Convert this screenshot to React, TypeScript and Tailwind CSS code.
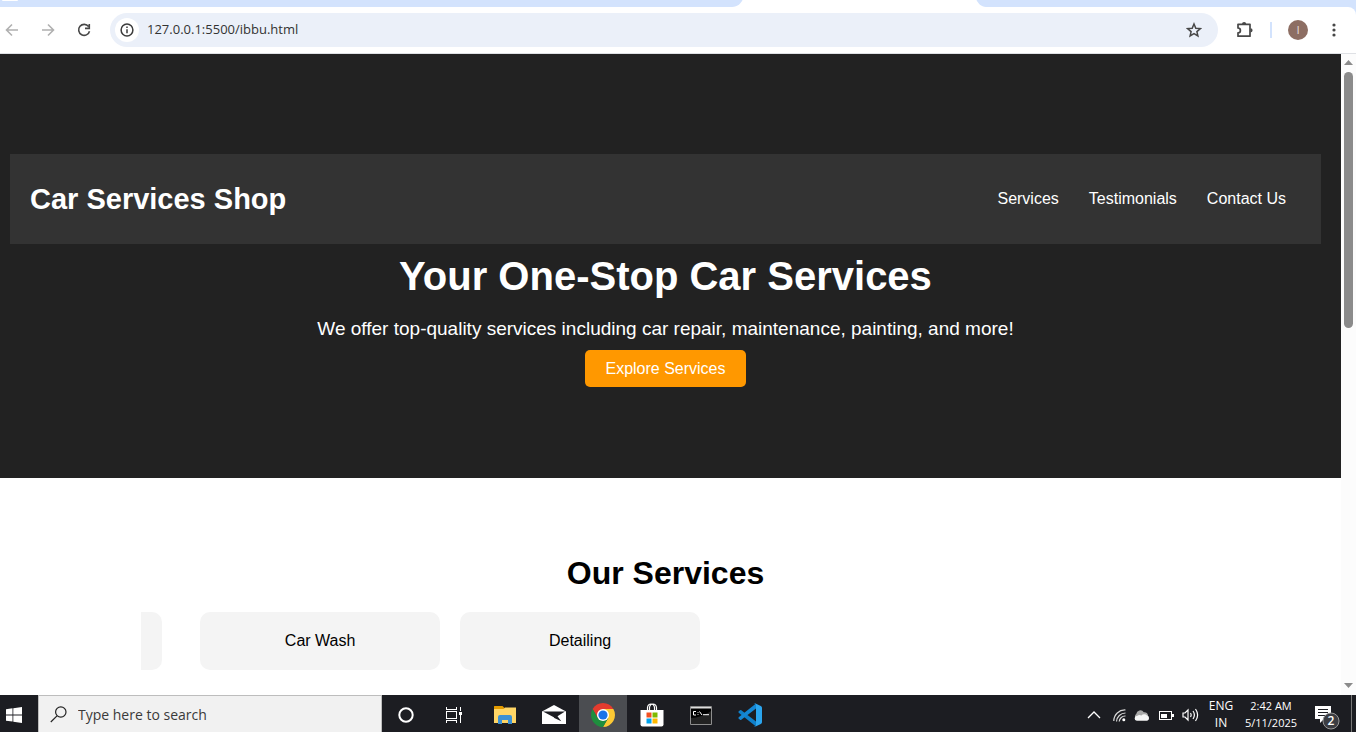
import type { ReactNode } from "react";

const navLinks = ["Services", "Testimonials", "Contact Us"];
const services = ["Car Wash", "Detailing"];

function TabStrip() {
  return (
    <div className="flex h-[7px] shrink-0 bg-[#d3e3fd]">
      <div className="flex w-[732px] items-start pl-[2px]">
        <span className="h-px w-4 rounded-b bg-white" />
      </div>
      <svg width="254" height="7" viewBox="0 0 254 7" aria-hidden="true">
        <path d="M0 7C6 7 9 3 10.500 0H244.500C246 3 249 7 254 7Z" fill="#fff" />
      </svg>
    </div>
  );
}

function Toolbar() {
  return (
    <div className="shrink-0 bg-[#d3e3fd]">
      <header className="flex h-[47px] items-center rounded-tr-lg border-b border-[#dfe1e5] bg-white pr-[13px] text-[#474747]">
        <button aria-label="Back" className="ml-1 text-[#b0b0b0]">
          <svg width="16" height="16" viewBox="0 0 16 16" fill="none" stroke="currentColor" strokeWidth="1.6">
            <path d="M14 8H3M8 2.500 2.500 8 8 13.500" />
          </svg>
        </button>
        <button aria-label="Forward" className="ml-5 text-[#b0b0b0]">
          <svg width="16" height="16" viewBox="0 0 16 16" fill="none" stroke="currentColor" strokeWidth="1.6">
            <path d="M2 8h11M8 2.500 13.500 8 8 13.500" />
          </svg>
        </button>
        <button aria-label="Reload" className="ml-5">
          <svg width="16" height="16" viewBox="0 0 16 16" fill="none" stroke="#474747" strokeWidth="1.600">
            <path d="M12.600 4.600A5.500 5.500 0 1 0 13.500 9.200M13.300 2v4.400H9" />
          </svg>
        </button>
        <div className="ml-[18px] flex h-[34px] flex-1 items-center rounded-full bg-[#ebf0f9] pr-4 pl-[5px]">
          <button aria-label="Site information" className="grid size-6 place-items-center rounded-full bg-white">
            <svg width="14" height="14" viewBox="0 0 14 14" fill="none" stroke="#3c3c3c" strokeWidth="1.500">
              <circle cx="7" cy="7" r="5.900" />
              <path d="M7 6.200v4M7 3.600v1.500" />
            </svg>
          </button>
          <input
            aria-label="Address"
            defaultValue="127.0.0.1:5500/ibbu.html"
            className="ml-2 min-w-0 flex-1 bg-transparent font-['Open_Sans',sans-serif] text-[13px] text-[#333333] outline-none"
          />
          <button aria-label="Bookmark this tab">
            <svg width="16" height="16" viewBox="0 0 16 16" fill="none" stroke="#474747" strokeWidth="1.500">
              <path d="M8 2l1.800 4.200 4.600.4-3.500 3 1 4.400L8 11.700 4.100 14l1-4.400-3.500-3 4.600-.4Z" />
            </svg>
          </button>
        </div>
        <button aria-label="Extensions" className="ml-[18px]">
          <svg width="18" height="18" viewBox="0 0 18 18">
            <path
              d="M2 3.300h12v11.900H2v-3.400a2.400 2.400 0 0 0 0-4.800Z"
              fill="none"
              stroke="#474747"
              strokeWidth="1.700"
              strokeLinejoin="round"
            />
            <path d="M6 3a2.100 2.100 0 0 1 4.200 0ZM14.500 7.200a2.100 2.100 0 0 1 0 4.200Z" fill="#474747" />
          </svg>
        </button>
        <span className="ml-4 h-4 w-0.5 bg-[#d3e3fd]" />
        <button
          aria-label="Profile"
          className="ml-4 grid size-5 place-items-center rounded-full bg-[#8d6e63] font-['Roboto',sans-serif] text-[10px] text-[#e5dcd8]"
        >
          I
        </button>
        <button aria-label="Menu" className="ml-[17px]">
          <svg width="18" height="18" viewBox="0 0 18 18" fill="#474747">
            <circle cx="9" cy="4" r="1.600" />
            <circle cx="9" cy="9" r="1.600" />
            <circle cx="9" cy="14" r="1.600" />
          </svg>
        </button>
      </header>
    </div>
  );
}

function Scrollbar() {
  return (
    <div className="flex w-[15px] shrink-0 flex-col items-center bg-[#fcfcfc] pt-[5px] pb-[6px]" aria-hidden="true">
      <svg width="9" height="7" viewBox="0 0 9 7" fill="#8b8b8b">
        <path d="M0 6 4.500 1 9 6Z" />
      </svg>
      <div className="flex flex-1 flex-col pt-[6px]">
        <span className="h-[42%] w-[9px] rounded-full bg-[#8b8b8b]" />
      </div>
      <svg width="9" height="7" viewBox="0 0 9 7" fill="#8b8b8b">
        <path d="M0 1 4.500 6 9 1Z" />
      </svg>
    </div>
  );
}

function Site() {
  return (
    <main className="min-w-0 flex-1 overflow-hidden bg-white font-['Liberation_Sans',sans-serif] text-base leading-[18px] text-black">
      <section className="bg-[#222222] pt-[100px] pr-5 pb-[91px] pl-[10px] text-center text-white">
        <nav className="flex h-[90px] items-center justify-between bg-[#333333] px-5 text-left">
          <h2 className="text-[29px] leading-8 font-bold">Car Services Shop</h2>
          <ul className="flex gap-[30px] pr-[15px]">
            {navLinks.map((label) => (
              <li key={label}>
                <a href="#services">{label}</a>
              </li>
            ))}
          </ul>
        </nav>
        <h1 className="mt-[9px] text-[40px] leading-[46px] font-bold">Your One-Stop Car Services</h1>
        <p className="mt-[19px] text-[19px] leading-[22px]">
          We offer top-quality services including car repair, maintenance, painting, and more!
        </p>
        <button className="mt-[10px] block h-[37px] justify-self-center rounded-[5px] bg-[#ff9800] px-5">
          Explore Services
        </button>
      </section>
      <section id="services" className="pt-[77px] pr-5 pl-[10px]">
        <h2 className="text-center text-[32px] leading-[37px] font-bold">Our Services</h2>
        <div className="mx-auto mt-5 flex w-4/5 overflow-hidden">
          <div className="h-[58px] w-[21px] shrink-0 rounded-r-[10px] bg-[#f4f4f4]" />
          <ul className="ml-[38px] flex gap-5">
            {services.map((name) => (
              <li key={name} className="w-60 rounded-[10px] bg-[#f4f4f4] p-5 text-center">
                {name}
              </li>
            ))}
          </ul>
        </div>
      </section>
    </main>
  );
}

function AppButton({ label, active, children }: { label: string; active?: boolean; children: ReactNode }) {
  return (
    <button
      aria-label={label}
      className={active ? "grid w-12 place-items-center bg-[#4b4d51] pt-[3px]" : "grid w-12 place-items-center pt-[3px]"}
    >
      {children}
    </button>
  );
}

function PinnedApps() {
  return (
    <div className="flex">
      <AppButton label="Cortana">
        <svg width="18" height="18" viewBox="0 0 18 18" fill="none" stroke="#fff" strokeWidth="2">
          <circle cx="9" cy="9" r="6.700" />
        </svg>
      </AppButton>
      <AppButton label="Task view">
        <svg width="18" height="16" viewBox="0 0 18 16" fill="none" stroke="#fff" shapeRendering="crispEdges">
          <path d="M1.500 4.500h10v7h-10ZM1.500 0v2.500h10V0M1.500 16v-2.500h10V16M15.500 0v4M15.500 8v8" />
          <path d="M14 5h3v3h-3Z" fill="#fff" stroke="none" />
        </svg>
      </AppButton>
      <div className="ml-[3px] flex gap-px">
        <AppButton label="File Explorer">
          <svg width="22" height="20" viewBox="0 0 22 20">
            <path d="M0 1.500A.5.500 0 0 1 .5 1H8.500l2 2v3H0Z" fill="#e39b00" />
            <path d="M0 4h9.500l1.500-1.500h11V18H0Z" fill="#ffd666" />
            <path d="M4 19v-7q0-2 2-2h10q2 0 2 2v7h-4v-4H8v4Z" fill="#3c91d4" />
          </svg>
        </AppButton>
        <AppButton label="Mail">
          <svg width="24" height="20" viewBox="0 0 24 20">
            <path d="M0 6.500 12 0l12 6.500V19H0Z" fill="#fff" />
            <path d="M1 6.500h22l-7.500 4.700 3.800 5-7-3.200-.5-.7Z" fill="#1c1d22" />
          </svg>
        </AppButton>
        <AppButton label="Google Chrome" active>
          <svg width="24" height="24" viewBox="0 0 24 24">
            <path d="M12 12 1.610 6A12 12 0 0 1 22.390 6Z" fill="#e33b2e" />
            <path d="M12 6H22.390A12 12 0 0 1 12 24L17.200 15Z" fill="#fcc934" />
            <path d="M1.610 6 6.800 15 12 12V6Z" fill="#e33b2e" />
            <path d="M1.610 6 6.800 15 12 18l5.200-3L12 24A12 12 0 0 1 1.610 6Z" fill="#1e8e3e" />
            <circle cx="12" cy="12" r="6" fill="#fff" />
            <circle cx="12" cy="12" r="4.600" fill="#1a73e8" />
          </svg>
        </AppButton>
        <AppButton label="Microsoft Store">
          <svg width="24" height="24" viewBox="0 0 24 24">
            <path
              d="M7.500 7V4.500Q8 1 11 1t3.500 3.500V7M9.500 7V4.500Q10 1 13 1t3.500 3.500V7"
              fill="none"
              stroke="#fff"
              strokeWidth="1.200"
            />
            <path d="M.5 7h23v14.500q0 2-2 2h-19q-2 0-2-2Z" fill="#fff" />
            <path d="M6.500 9.500h5v5h-5Z" fill="#f25022" />
            <path d="M12.500 9.500h5v5h-5Z" fill="#7fba00" />
            <path d="M6.500 15.500h5v5h-5Z" fill="#00a4ef" />
            <path d="M12.500 15.500h5v5h-5Z" fill="#ffb900" />
          </svg>
        </AppButton>
        <AppButton label="Command Prompt">
          <svg width="22" height="19" viewBox="0 0 22 19">
            <path d="M.5.500h21v18H.5Z" fill="#000" stroke="#8e8e8e" />
            <path d="M1 1h20v1.500H1Z" fill="#ddd" />
            <path d="M1 12C8 12 15 9 21 5v13H1Z" fill="#222" />
            <path d="M6 5.500H3.500v3.500H6M8 6v.8M8 8.200V9M9.500 5.500 12 9M13 8.700h6" fill="none" stroke="#fff" />
          </svg>
        </AppButton>
        <AppButton label="Visual Studio Code">
          <svg width="24" height="24" viewBox="0 0 24 24">
            <path d="M.5 8.500 2 7.200q.6-.5 1.300 0L18 18.500v5L1 10Q0 9.200.5 8.500Z" fill="#0f7fc9" />
            <path d="M.5 15.500 2 16.800q.6.500 1.300 0L18 5.500v-5L1 14q-1 .8-.5 1.500Z" fill="#1487d4" />
            <path
              d="M17 .3 22.800 3q1.200.6 1.200 1.800v14.400q0 1.200-1.200 1.800L17 23.700q-.7.300-1.400-.3 2.400.8 2.400-1.500V2.100Q18-.2 15.600.6q.7-.6 1.400-.3Z"
              fill="#2ba5ee"
            />
          </svg>
        </AppButton>
      </div>
    </div>
  );
}

function Tray() {
  return (
    <div className="ml-auto flex text-white">
      <div className="flex items-center gap-2 pt-[3px]">
        <button aria-label="Show hidden icons">
          <svg width="14" height="10" viewBox="0 0 14 10" fill="none" stroke="#fff" strokeWidth="1.300">
            <path d="M1 8l6-6 6 6" />
          </svg>
        </button>
        <button aria-label="Network" className="ml-1">
          <svg width="13" height="13" viewBox="0 0 13 13" fill="none" stroke="#d8d8d8" strokeWidth="1.200">
            <path d="M.8 12A11 11 0 0 1 12.500 1M3.500 12.500A9 9 0 0 1 12.500 4M6.200 12.500A6 6 0 0 1 12.500 7" />
            <circle cx="10.800" cy="10.800" r="1.500" fill="#fff" stroke="none" />
          </svg>
        </button>
        <button aria-label="OneDrive">
          <svg width="16" height="11" viewBox="0 0 16 11">
            <path d="M2 8.500A2.800 2.800 0 0 1 2.200 4 4.200 4.200 0 0 1 9.800 2.200 3.600 3.600 0 0 1 14 6Z" fill="#a8a8a8" />
            <path
              d="M2.800 10.700a2.300 2.300 0 0 1 .3-4.600 3.500 3.500 0 0 1 4.300-.6 3.600 3.600 0 0 1 5.600 0 2.700 2.700 0 0 1 .2 5.200Z"
              fill="#f5f5f5"
            />
          </svg>
        </button>
        <button aria-label="Battery">
          <svg width="16" height="11" viewBox="0 0 16 11" shapeRendering="crispEdges">
            <path d="M1 1.500h12.500v8H1Z" fill="none" stroke="#fff" />
            <path d="M3 3.500h6v4H3ZM14 4h2v3h-2Z" fill="#fff" />
          </svg>
        </button>
        <button aria-label="Volume">
          <svg width="18" height="14" viewBox="0 0 18 14" fill="none" stroke="#fff" strokeWidth="1.200">
            <path d="M1 5h2l3-3v10L3 9H1ZM8.500 5q1.300 2 0 4M11 3q2.800 4 0 8M13.500 1q4.200 6 0 12" />
          </svg>
        </button>
      </div>
      <button className="ml-2 w-[26px] pt-px text-center text-xs leading-[17px]">
        ENG
        <br />
        IN
      </button>
      <button className="ml-2 w-[58px] pt-px text-center text-[11px] leading-[17px] whitespace-nowrap">
        2:42 AM
        <br />
        5/11/2025
      </button>
      <button aria-label="Notifications, 2 new" className="relative ml-[14px] pt-[6px]">
        <svg width="26" height="26" viewBox="0 0 26 26">
          <path d="M1 2h16v13h-7l-4 4v-4H1Z" fill="#fff" />
          <path d="M4 5.500h10M4 8.500h10M4 11.500h7" stroke="#1c1d22" strokeWidth="1.200" />
          <circle cx="17" cy="17" r="8" fill="#3c3d42" stroke="#999" />
        </svg>
        <span className="absolute right-px bottom-[3px] w-4 text-center text-xs leading-4 font-semibold">2</span>
      </button>
      <span className="ml-[11px] h-full w-px bg-[#777]" />
      <span className="w-1" />
    </div>
  );
}

function Taskbar() {
  return (
    <footer className="flex h-[37px] shrink-0 bg-[#1c1d22] font-['Open_Sans',sans-serif]">
      <button aria-label="Start" className="w-[38px] shrink-0 pt-[2px] pl-[6px]">
        <svg width="16" height="16" viewBox="0 0 16 16" fill="#fff">
          <path d="M0 2.200 6.500 1.300v6.200H0ZM7.300 1.200 16 0v7.500H7.300ZM0 8.400h6.500v6.200L0 13.700ZM7.300 8.400H16V16l-8.700-1.200Z" />
        </svg>
      </button>
      <label className="flex w-[344px] items-center border border-b-0 border-[#bdbdbd] bg-[#f1f1f1] pt-px pl-[11px]">
        <svg width="17" height="17" viewBox="0 0 17 17" fill="none" stroke="#222" strokeWidth="1.200">
          <circle cx="10.800" cy="6" r="5.200" />
          <path d="M7 9.800.8 16" />
        </svg>
        <input
          aria-label="Search"
          placeholder="Type here to search"
          className="ml-[11px] min-w-0 flex-1 bg-transparent text-sm text-black outline-none placeholder:text-[#3a3a3a]"
        />
      </label>
      <PinnedApps />
      <Tray />
    </footer>
  );
}

export default function App() {
  return (
    <div className="flex h-screen flex-col overflow-hidden">
      <TabStrip />
      <Toolbar />
      <div className="flex min-h-0 flex-1">
        <Site />
        <Scrollbar />
      </div>
      <Taskbar />
    </div>
  );
}
